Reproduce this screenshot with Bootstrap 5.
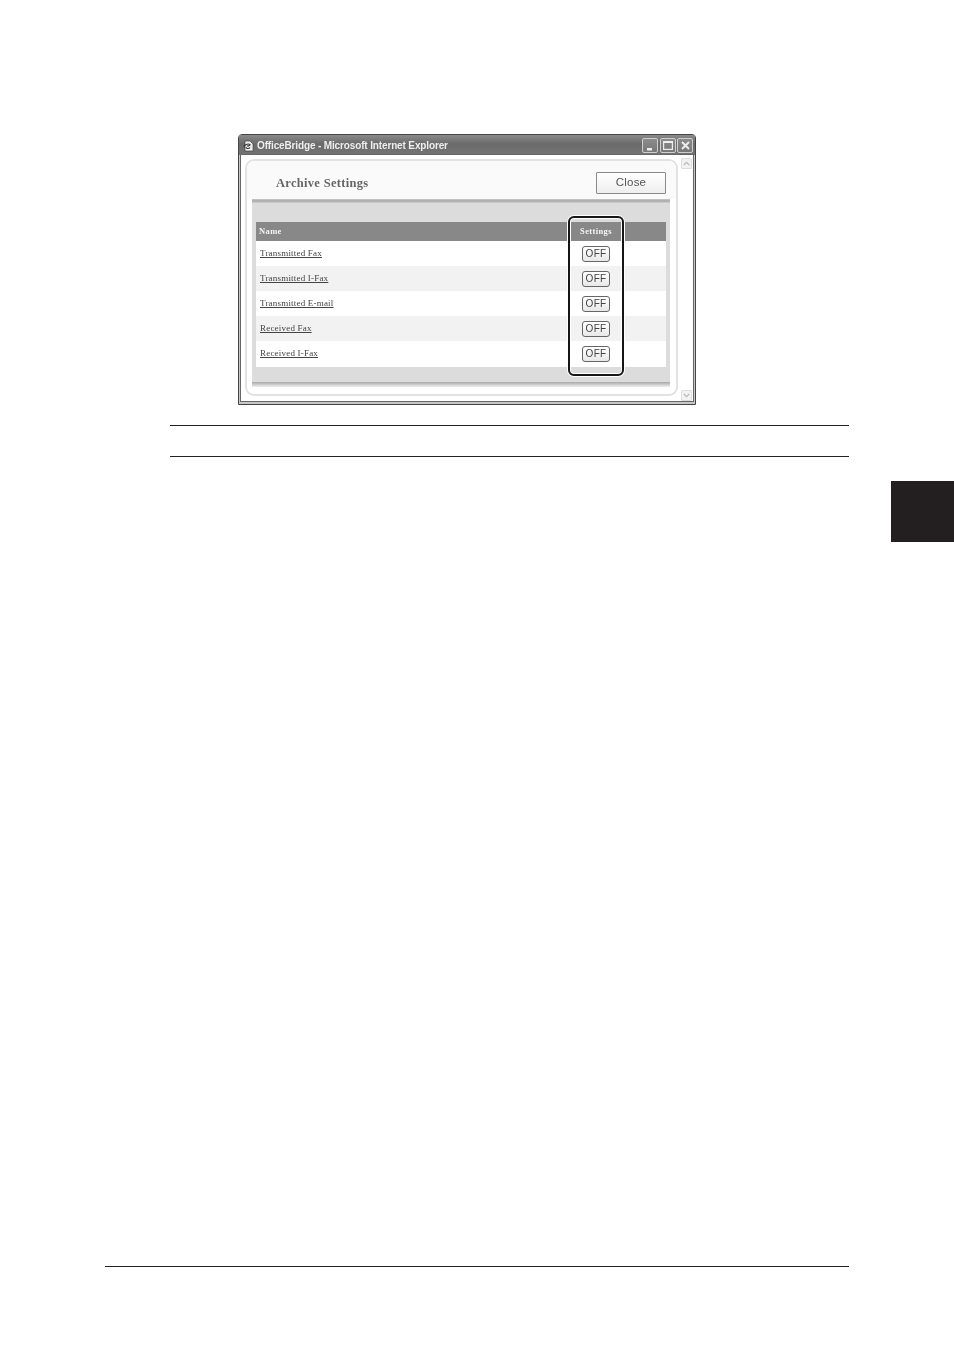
<!DOCTYPE html>
<html lang="en">
<head>
<meta charset="utf-8">
<title>Archive Settings</title>
<link href="https://cdn.jsdelivr.net/npm/bootstrap@5.3.0/dist/css/bootstrap.min.css" rel="stylesheet">
<style>
html,body{background:#fff;margin:0}
.sheet{width:954px;height:1347px;overflow:hidden}
.xpwin{width:458px;height:271px;margin:134px 0 0 238px;border:1px solid #444;background:#c8c8c8;border-top-left-radius:4px;border-top-right-radius:4px;filter:grayscale(1) blur(.3px)}
.xptitle{height:20px;padding:1px 2px 0 4px;background:linear-gradient(#8a8a8a,#6a6a6a 45%,#747474);color:#eee}
.xptitle-text{font:700 10px/1 "Liberation Sans",sans-serif;letter-spacing:-.14px;margin-left:3px}
.xpctl{width:16px;height:15px;border:1px solid #cfcfcf;border-radius:2px;background:linear-gradient(#8c8c8c,#777);margin-left:1.5px}
.xpclient{width:452px;height:246px;margin:0 2px;background:#fff;padding:4px 1px 0 4px;box-shadow:0 0 0 1px #666}
.xppanel{flex:none;width:433px;height:237px;border:2px solid #e2e2e2;border-radius:9px;background:#fff;padding:0 6px 0 5px;overflow:hidden}
.xphead{height:38px;margin:0 -6px 0 -5px;padding:6px 10px 0 29px;background:#fafafa}
.xphead-title{font:700 12.5px/1 "Liberation Serif",serif;color:#666;letter-spacing:.3px}
.closebtn{width:70px;height:22px;padding:0;border:1px solid #8a8a8a;border-radius:1px;background:linear-gradient(#fff,#eee);color:#555;font:11.5px/1 "Liberation Sans",sans-serif;letter-spacing:.2px}
.xpsep{height:4px;background:linear-gradient(#c8c8c8,#a8a8a8 50%,#d4d4d4)}
.graybox{height:179px;padding:19px 4px 0;background:#dcdcdc}
.xpshadow{height:5px;background:linear-gradient(#a8a8a8,#f0f0f0)}
.tablewrap{width:410px}
.archive{table-layout:fixed;width:410px;--bs-table-bg:#fff;--bs-table-color:#444}
.archive>:not(caption)>*>*{padding:0 0 0 4px;height:25px;vertical-align:middle;box-shadow:none;border:0;font-size:9px;line-height:1}
.archive>tbody>tr>td:first-child{padding-bottom:2px}
.archive>tbody>tr:last-child>td{height:26px}
.archive .hdr>*{height:19px;--bs-table-bg:#888;color:#f4f4f4;font:700 8.5px/1 "Liberation Serif",serif;letter-spacing:.38px;padding-left:3px}
.archive .alt>*{--bs-table-bg:#f2f2f2}
.archive .setcell,.archive .hdr .setcell{padding:0;text-align:center}
.archive a{font:9px/1 "Liberation Serif",serif;letter-spacing:.2px;color:#444;text-decoration:underline}
.offbtn{display:block;width:28px;height:16px;margin:0 auto;padding:0;border:1px solid #666;border-radius:3px;background:linear-gradient(#fff,#e8e8e8);color:#444;font:10px/1 "Liberation Sans",sans-serif;letter-spacing:.3px}
.callout{left:311.5px;top:-6px;width:56px;height:160px;border:2px solid #161616;border-radius:6px;box-shadow:0 0 0 1px #fff,inset 0 0 0 1px #fff;pointer-events:none}
.scrolltrack{flex:none;width:11px;height:243px;margin:-1px 0 0 3px}
.scrollbtn{width:11px;height:11px;border:1px solid #ddd;border-radius:1px;background:#f2f2f2}
.rules{height:32px;margin:20px 105px 0 170px;border-top:1px solid #222;border-bottom:1px solid #222}
.sidetab{width:63px;height:61px;margin-top:24px;background:#231f20}
.footrule{height:1px;margin:0 105px 80px;background:#222}
</style>
</head>
<body>
<div class="sheet d-flex flex-column">
  <div class="xpwin">
    <div class="xptitle d-flex align-items-center">
      <svg width="11" height="12" viewBox="0 0 11 12"><path d="M2 1h5l3 3v7H2z" fill="#eee" stroke="#333" stroke-width=".6"/><path d="M1 7c0-2 4-4 6-2.500 0 1-1 1.500-3 1.500M7 7.500C6 9 3 9 3 7" fill="none" stroke="#333" stroke-width="1.100"/></svg>
      <span class="xptitle-text">OfficeBridge - Microsoft Internet Explorer</span>
      <div class="ms-auto d-flex">
        <div class="xpctl d-flex align-items-end justify-content-center">
          <svg width="8" height="9" viewBox="0 0 8 9"><rect x="1" y="5" width="5" height="2.500" fill="#eee"/></svg>
        </div>
        <div class="xpctl d-flex align-items-center justify-content-center">
          <svg width="10" height="9" viewBox="0 0 10 9"><rect x=".6" y=".6" width="8.800" height="7.800" fill="none" stroke="#eee" stroke-width="1.200"/><rect x="0" y="0" width="10" height="2" fill="#eee"/></svg>
        </div>
        <div class="xpctl d-flex align-items-center justify-content-center">
          <svg width="11" height="11" viewBox="0 0 11 11"><path d="M2 2l7 7M9 2l-7 7" stroke="#eee" stroke-width="1.900"/></svg>
        </div>
      </div>
    </div>
    <div class="xpclient d-flex">
      <div class="xppanel">
        <div class="xphead d-flex align-items-center justify-content-between">
          <span class="xphead-title">Archive Settings</span>
          <button type="button" class="closebtn">Close</button>
        </div>
        <div class="xpsep"></div>
        <div class="graybox">
          <div class="tablewrap position-relative">
            <table class="table table-borderless archive mb-0">
              <colgroup><col style="width:315px"><col style="width:50px"><col style="width:45px"></colgroup>
              <thead><tr class="hdr"><th>Name</th><th class="setcell">Settings</th><th></th></tr></thead>
              <tbody>
                <tr><td><a href="#">Transmitted Fax</a></td><td class="setcell"><button type="button" class="offbtn">OFF</button></td><td></td></tr>
                <tr class="alt"><td><a href="#">Transmitted I-Fax</a></td><td class="setcell"><button type="button" class="offbtn">OFF</button></td><td></td></tr>
                <tr><td><a href="#">Transmitted E-mail</a></td><td class="setcell"><button type="button" class="offbtn">OFF</button></td><td></td></tr>
                <tr class="alt"><td><a href="#">Received Fax</a></td><td class="setcell"><button type="button" class="offbtn">OFF</button></td><td></td></tr>
                <tr><td><a href="#">Received I-Fax</a></td><td class="setcell"><button type="button" class="offbtn">OFF</button></td><td></td></tr>
              </tbody>
            </table>
            <div class="callout position-absolute"></div>
          </div>
        </div>
        <div class="xpshadow"></div>
      </div>
      <div class="scrolltrack d-flex flex-column justify-content-between">
        <div class="scrollbtn d-flex align-items-center justify-content-center">
          <svg width="7" height="5" viewBox="0 0 7 5"><path d="M.8 4l2.700-2.700L6.200 4" fill="none" stroke="#bbb" stroke-width="1.300"/></svg>
        </div>
        <div class="scrollbtn d-flex align-items-center justify-content-center">
          <svg width="7" height="5" viewBox="0 0 7 5"><path d="M.8 1l2.700 2.700L6.200 1" fill="none" stroke="#bbb" stroke-width="1.300"/></svg>
        </div>
      </div>
    </div>
  </div>
  <div class="rules"></div>
  <div class="sidetab align-self-end"></div>
  <div class="footrule mt-auto"></div>
</div>
<script src="https://cdn.jsdelivr.net/npm/bootstrap@5.3.0/dist/js/bootstrap.bundle.min.js"></script>
</body>
</html>
